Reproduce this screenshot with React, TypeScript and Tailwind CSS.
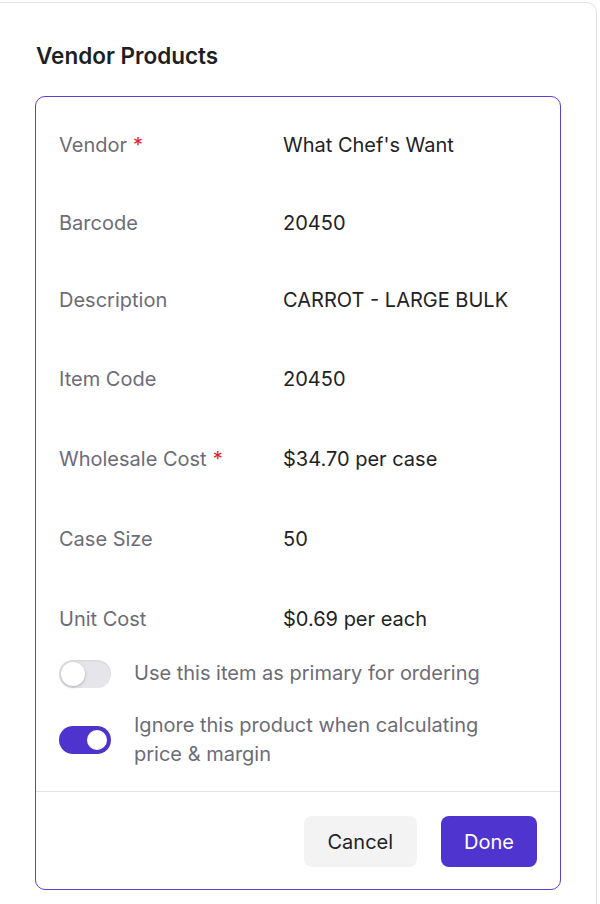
import React from "react";

function Toggle({ on }: { on: boolean }) {
  return on ? (
    <div className="w-[52px] h-[28px] rounded-full bg-[#4f33cf] flex items-center justify-end pr-[2px] shrink-0">
      <div className="w-[24px] h-[24px] rounded-full bg-white border-2 border-[#4f33cf]" />
    </div>
  ) : (
    <div className="w-[52px] h-[28px] rounded-full bg-[#e6e6ea] flex items-center pl-[2px] shrink-0 shadow-[inset_0_1px_2px_rgba(0,0,0,0.08)]">
      <div className="w-[24px] h-[24px] rounded-full bg-white shadow-[0_1px_3px_rgba(0,0,0,0.25)]" />
    </div>
  );
}

const rows: { label: string; value: string; req?: boolean; h: string }[] = [
  { label: "Vendor", value: "What Chef's Want", req: true, h: "h-[77px]" },
  { label: "Barcode", value: "20450", h: "h-[78px]" },
  { label: "Description", value: "CARROT - LARGE BULK", h: "h-[77px]" },
  { label: "Item Code", value: "20450", h: "h-[80px]" },
  { label: "Wholesale Cost", value: "$34.70 per case", req: true, h: "h-[80px]" },
  { label: "Case Size", value: "50", h: "h-[80px]" },
  { label: "Unit Cost", value: "$0.69 per each", h: "h-[80px]" },
];

export default function App() {
  return (
    <div
      className="w-[600px] h-[904px] bg-white overflow-hidden"
      style={{ fontFamily: "Inter, 'Noto Sans', sans-serif" }}
    >
      <div className="mt-[2px] w-[597px] h-[920px] border-t border-r border-[#e4e4e8] rounded-tr-[10px]">
        <div className="pl-[36px] pt-[37px] h-[93px]">
          <h1 className="text-[22.5px] leading-[32px] font-semibold text-[#1e1f23]">Vendor Products</h1>
        </div>
        <div className="ml-[35px] w-[526px] border border-[#5a3fd8] rounded-[10px]">
          <div className="pt-[10px] px-[23px]">
            {rows.map((r) => (
              <div key={r.label} className={`flex items-center ${r.h} text-[20px] leading-[29px]`}>
                <div className="w-[224px] text-[#6c6c78]">
                  {r.label}
                  {r.req && <span className="text-[#e5202a] ml-[6px]">*</span>}
                </div>
                <div className="text-[#222226]">{r.value}</div>
              </div>
            ))}
            <div className="flex items-center gap-[23px] text-[20px] leading-[29px] text-[#6c6c78]">
              <Toggle on={false} />
              <span>Use this item as primary for ordering</span>
            </div>
            <div className="flex items-center gap-[23px] mt-[23px] text-[20px] leading-[29px] text-[#6c6c78] pb-[22px]">
              <Toggle on={true} />
              <span>
                Ignore this product when calculating
                <br />
                price &amp; margin
              </span>
            </div>
          </div>
          <div className="border-t border-[#e2e2e6] flex justify-end gap-[24px] px-[23px] pt-[24px] pb-[22px]">
            <button className="h-[51px] px-[24px] rounded-[8px] bg-[#f3f3f4] text-[#222226] text-[20px]">
              Cancel
            </button>
            <button className="h-[51px] px-[23px] rounded-[8px] bg-[#5034d0] text-white text-[20px]">
              Done
            </button>
          </div>
        </div>
      </div>
    </div>
  );
}
